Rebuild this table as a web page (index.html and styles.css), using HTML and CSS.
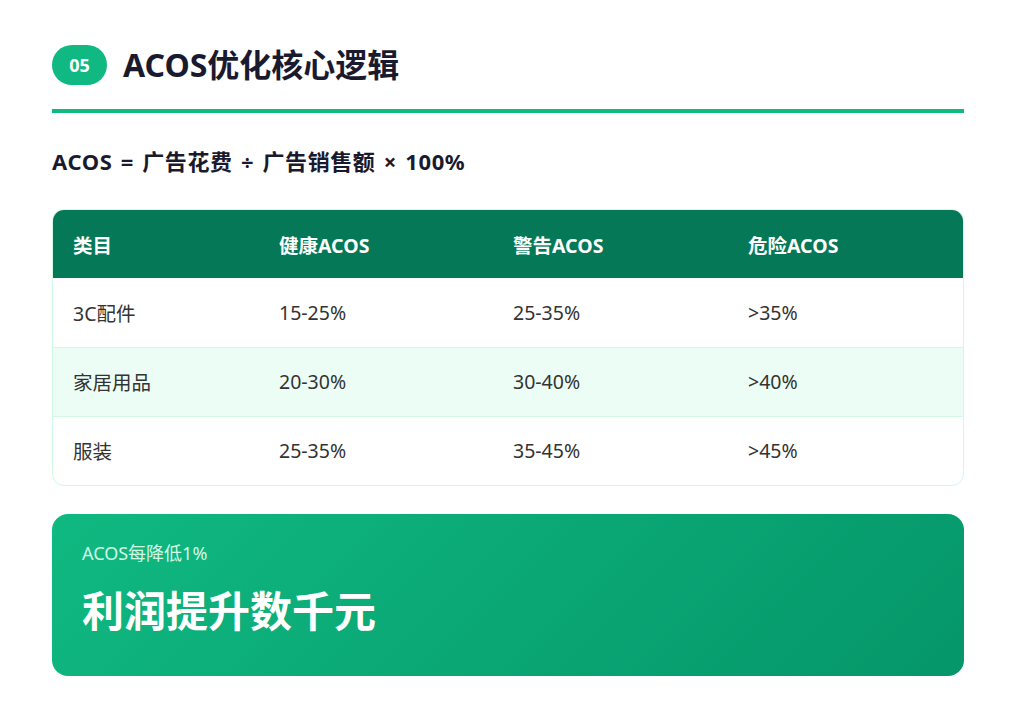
FILE: index.html
```html
<!DOCTYPE html>
<html lang="zh-CN">
<head>
<meta charset="utf-8">
<title>ACOS优化核心逻辑</title>
<link rel="stylesheet" href="styles.css">
</head>
<body>
<main class="page">
  <header class="head">
    <span class="badge">05</span>
    <h1 class="title">ACOS优化核心逻辑</h1>
  </header>
  <p class="formula">ACOS = 广告花费 ÷ 广告销售额 × 100%</p>
  <div class="table-wrap">
    <table class="acos">
      <colgroup>
        <col class="c1"><col class="c2"><col class="c3"><col class="c4">
      </colgroup>
      <thead>
        <tr><th>类目</th><th>健康ACOS</th><th>警告ACOS</th><th>危险ACOS</th></tr>
      </thead>
      <tbody>
        <tr><td>3C配件</td><td>15-25%</td><td>25-35%</td><td>&gt;35%</td></tr>
        <tr class="alt"><td>家居用品</td><td>20-30%</td><td>30-40%</td><td>&gt;40%</td></tr>
        <tr><td>服装</td><td>25-35%</td><td>35-45%</td><td>&gt;45%</td></tr>
      </tbody>
    </table>
  </div>
  <section class="card">
    <p class="card-sub">ACOS每降低1%</p>
    <p class="card-main">利润提升数千元</p>
  </section>
</main>
</body>
</html>
```
FILE: styles.css
```css
* { box-sizing: border-box; }
html, body { margin: 0; padding: 0; background: #ffffff; }
body {
  font-family: "Noto Sans", "Noto Sans CJK SC", sans-serif;
  color: #1a1a2e;
}
.page {
  padding: 45px 52px 0 52px;
  display: flex;
  flex-direction: column;
}
.head {
  display: flex;
  align-items: center;
  gap: 16px;
  padding-bottom: 24px;
  border-bottom: 4px solid #10b981;
}
.badge {
  width: 55px;
  height: 40px;
  border-radius: 20px;
  background: #10b981;
  color: #fff;
  font-weight: 700;
  font-size: 18px;
  display: flex;
  align-items: center;
  justify-content: center;
}
.title {
  margin: 0;
  font-size: 32px;
  font-weight: 700;
  line-height: 40px;
  color: #1a1a2e;
}
.formula {
  margin: 33px 0 0 0;
  font-size: 22px;
  font-weight: 700;
  line-height: 30px;
  letter-spacing: 0.6px;
  word-spacing: 2px;
  color: #1a1a2e;
}
.table-wrap {
  margin-top: 33px;
  border: 1px solid #d1fae5;
  border-radius: 12px;
  overflow: hidden;
}
.acos {
  width: 100%;
  border-collapse: collapse;
  table-layout: fixed;
}
.c1 { width: 206px; }
.c2 { width: 234px; }
.c3 { width: 235px; }
.acos th {
  background: #047857;
  color: #ffffff;
  font-weight: 700;
  font-size: 19.5px;
  text-align: left;
  height: 68px;
  padding: 0 20px;
}
.acos td {
  font-size: 19.5px;
  color: #333333;
  height: 69px;
  padding: 0 20px;
  border-top: 1px solid #d1fae5;
}
.acos thead + tbody tr:first-child td { border-top: none; }
.acos tr.alt td { background: #ecfdf5; }
.card {
  margin-top: 28px;
  height: 162px;
  border-radius: 16px;
  background: linear-gradient(135deg, #10b981 0%, #059669 100%);
  padding: 27px 30px;
  color: #fff;
}
.card-sub {
  margin: 0;
  font-size: 18px;
  line-height: 24px;
  color: #d1fae5;
}
.card-main {
  margin: 20px 0 0 0;
  font-size: 42px;
  font-weight: 700;
  line-height: 52px;
  color: #ffffff;
}
```
